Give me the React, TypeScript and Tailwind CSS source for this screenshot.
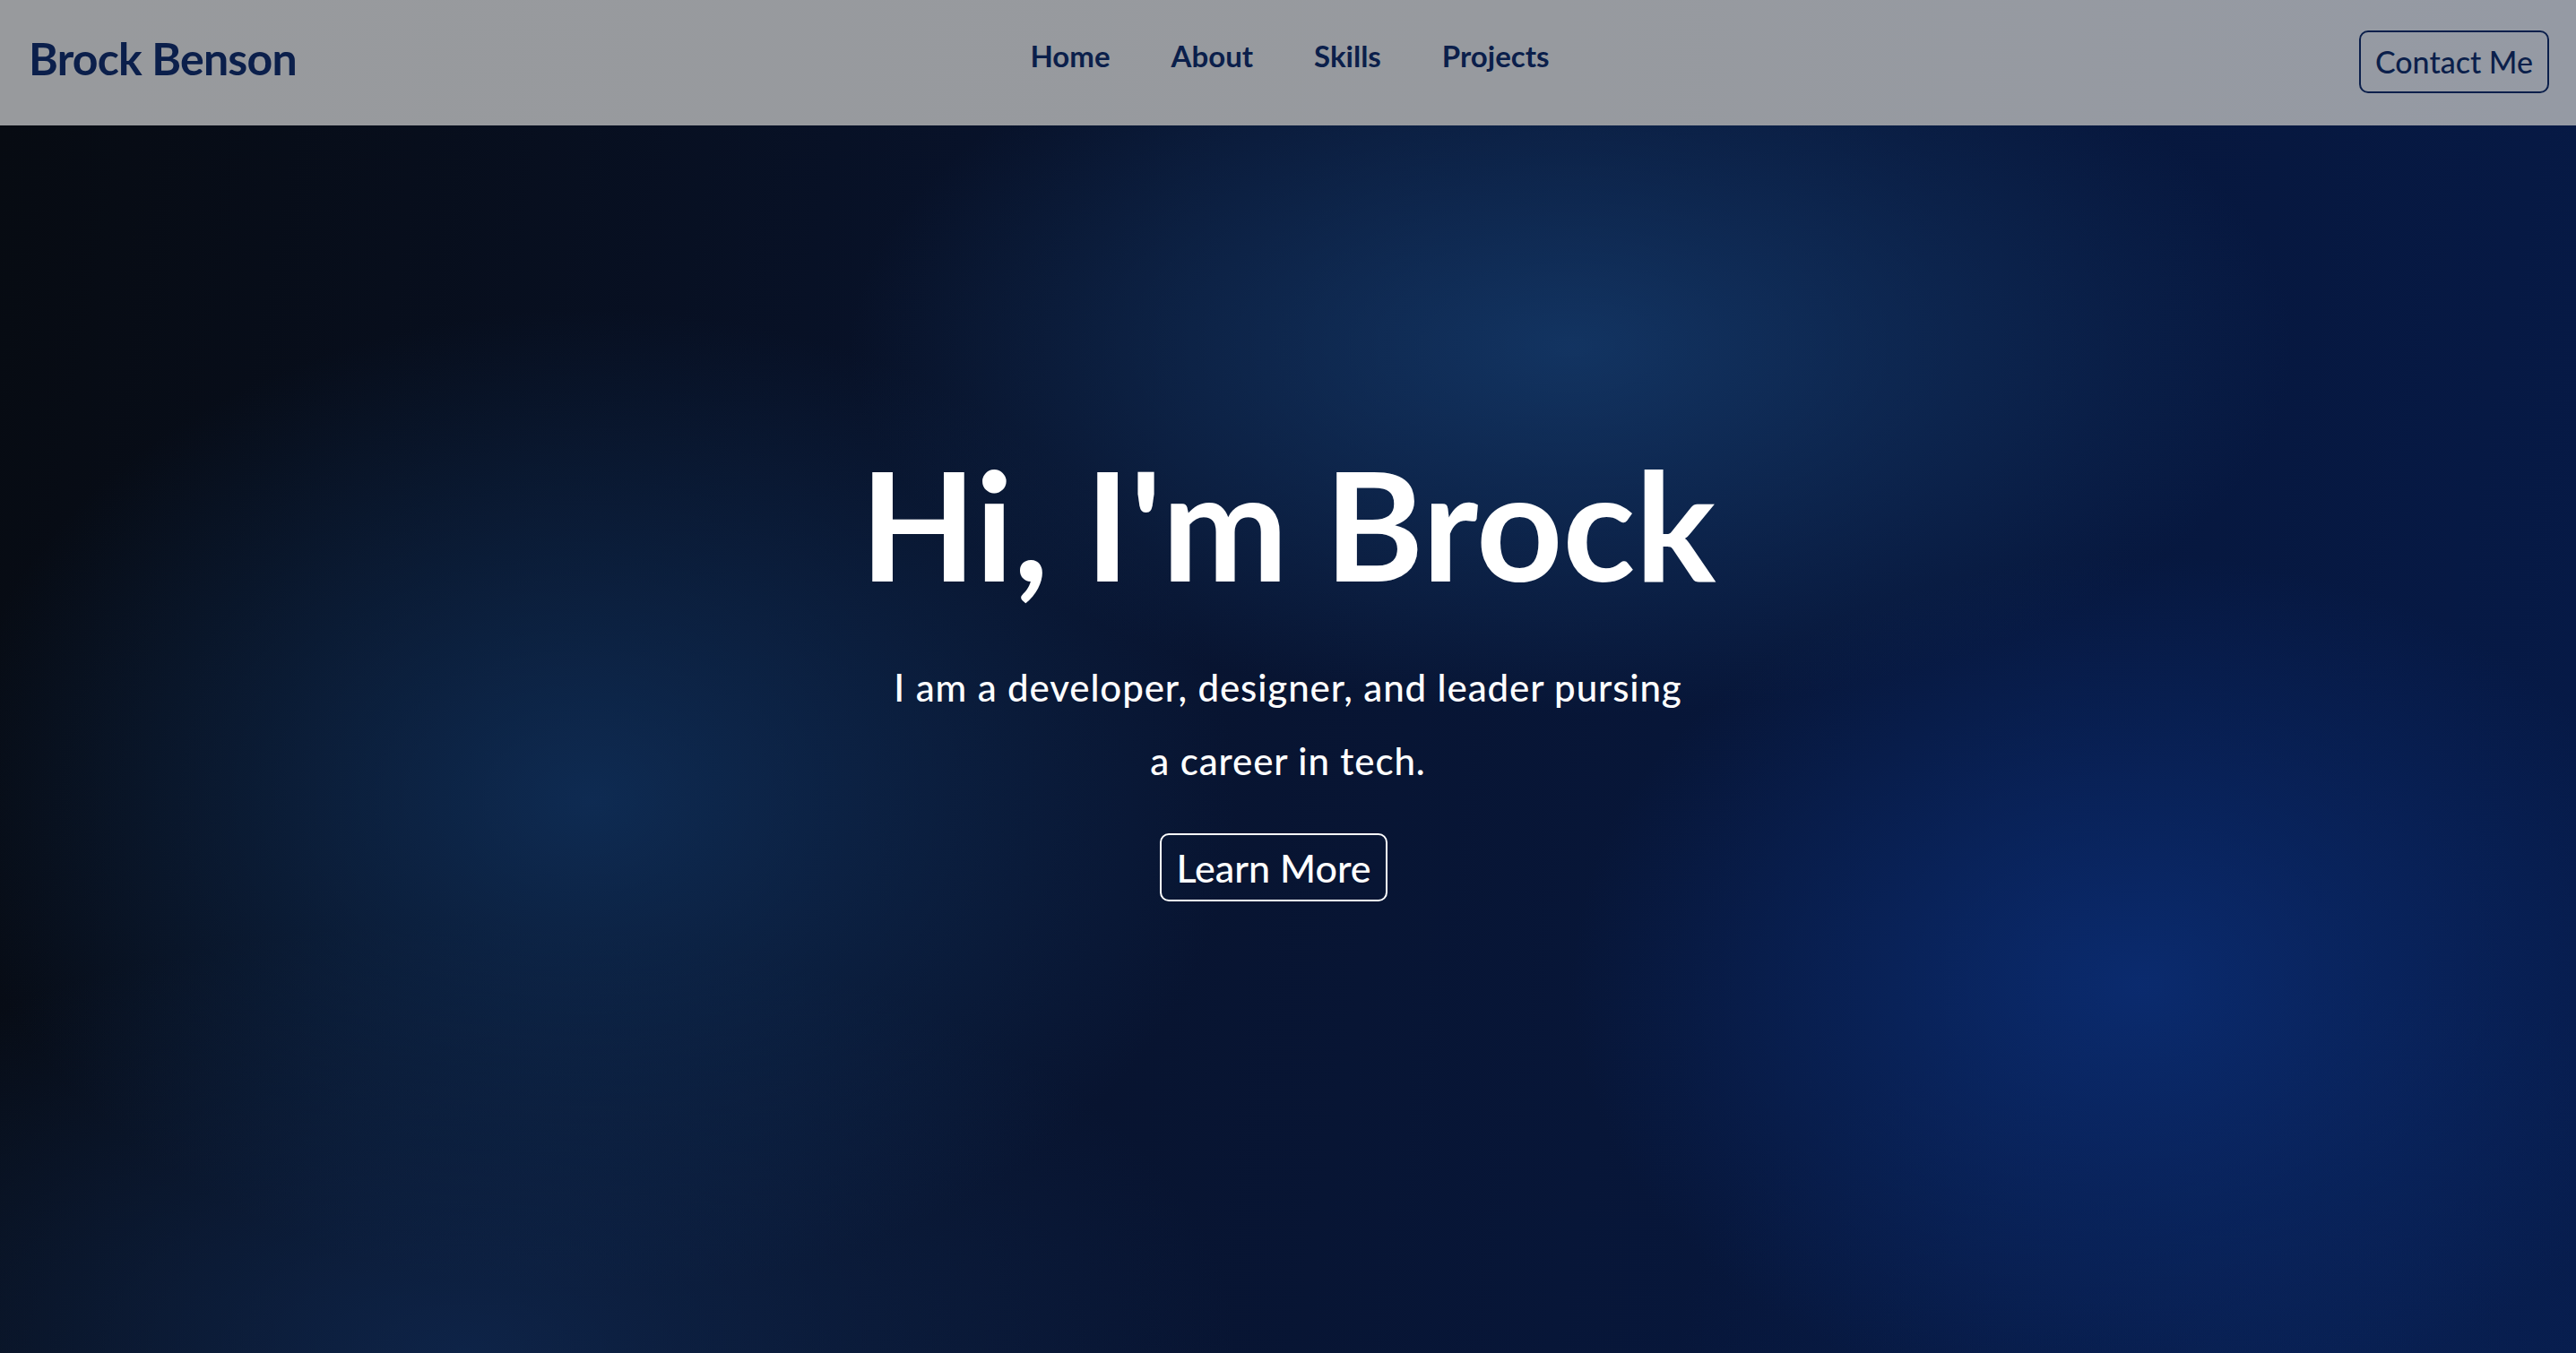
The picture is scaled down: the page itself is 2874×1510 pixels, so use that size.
export default function App() {
  const links = ['Home', 'About', 'Skills', 'Projects'];

  return (
    <div className="min-h-screen w-full font-['Lato','Open_Sans',sans-serif] bg-[#070d1a]">
      {/* Nav */}
      <nav className="h-[140px] grid grid-cols-3 items-center px-[32px] bg-[linear-gradient(90deg,#989a9d,#979a9f_60%,#959aa4)]">
        <a className="justify-self-start text-[50px] font-bold text-[#0b1f4b] tracking-[-0.8px] leading-none -mt-[10px]">
          Brock Benson
        </a>
        <ul className="justify-self-center flex gap-[68px] -mt-[16px] ml-[4px]">
          {links.map((link) => (
            <li key={link} className="text-[33px] font-bold text-[#0b1f4b] leading-none">
              {link}
            </li>
          ))}
        </ul>
        <button className="justify-self-end w-[212px] h-[70px] rounded-[10px] border-[2px] border-[#0b1f4b] text-[34px] text-[#0b1f4b] font-medium leading-none -mt-[2px] mr-[-2px]">
          Contact Me
        </button>
      </nav>

      {/* Hero */}
      <section className="h-[1370px] flex flex-col items-center pt-[360px] text-white bg-[radial-gradient(ellipse_28%_30%_at_61%_18%,rgba(22,62,112,0.75),transparent),radial-gradient(ellipse_25%_40%_at_23%_55%,rgba(17,54,102,0.7),transparent),radial-gradient(ellipse_22%_35%_at_83%_70%,rgba(11,46,118,0.85),transparent),radial-gradient(ellipse_30%_35%_at_18%_100%,rgba(16,42,84,0.75),transparent),radial-gradient(ellipse_25%_30%_at_90%_100%,rgba(10,36,90,0.6),transparent),linear-gradient(100deg,#070b12,#081430_45%,#061a48)]">
        <h1 className="text-[168px] font-bold leading-none">
          Hi, I'm Brock
        </h1>
        <p className="mt-[58px] text-[42px] font-medium leading-[82px] tracking-[0.9px] text-center">
          I am a developer, designer, and leader pursing
          <br />
          a career in tech.
        </p>
        <button className="mt-[40px] mr-[32px] w-[254px] h-[76px] rounded-[10px] border-[2px] border-white text-[43px] font-medium leading-none">
          Learn More
        </button>
      </section>
    </div>
  );
}
